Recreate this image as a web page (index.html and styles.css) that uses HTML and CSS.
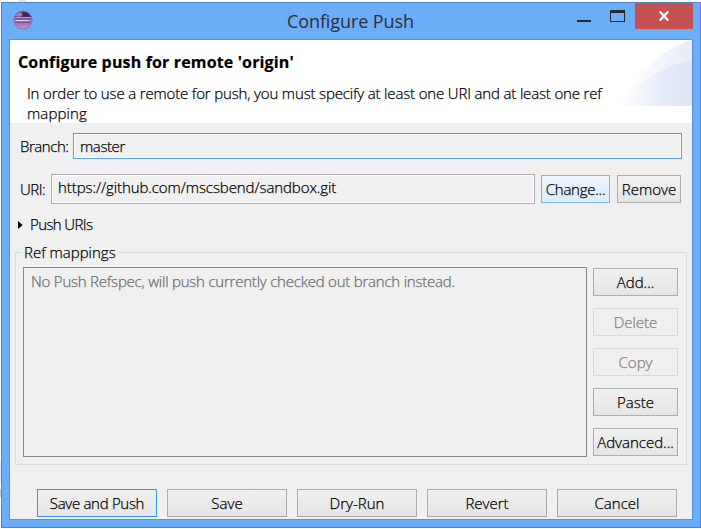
FILE: index.html
```
<!DOCTYPE html>
<html lang="en">
<head>
<meta charset="utf-8">
<title>Configure Push</title>
<link rel="stylesheet" href="styles.css">
</head>
<body>
<div class="window">
  <div class="titlebar">
    <svg class="app-icon" width="20" height="20" viewBox="0 0 20 20">
      <defs>
        <linearGradient id="orb" x1="0" y1="0" x2="0" y2="1">
          <stop offset="0" stop-color="#6b4a80"/>
          <stop offset="0.25" stop-color="#55356f"/>
          <stop offset="0.5" stop-color="#8562a8"/>
          <stop offset="1" stop-color="#bd9dd0"/>
        </linearGradient>
        <clipPath id="disc"><circle cx="10" cy="10" r="9"/></clipPath>
      </defs>
      <circle cx="10" cy="10" r="9.300" fill="url(#orb)"/>
      <g clip-path="url(#disc)">
        <path d="M9 2h10v5H7z" fill="#35194f" opacity=".6"/>
        <path d="M1 7.500h18M1 10.500h18" stroke="#b898cc" stroke-width="1"/>
        <path d="M3 10.500h12" stroke="#e6d0ea" stroke-width="1"/>
        <path d="M3 12.500h14" stroke="#7a559c" stroke-width="1"/>
        <ellipse cx="6" cy="4.500" rx="3.500" ry="2" fill="#c9a5bb" opacity=".7"/>
      </g>
      <circle cx="10" cy="10" r="9" fill="none" stroke="#8473b4" stroke-width="1"/>
    </svg>
    <h1 class="title">Configure Push</h1>
    <div class="controls">
      <svg width="59" height="26" viewBox="0 0 59 26" shape-rendering="crispEdges">
        <path d="M1 17h14v2H1z" fill="#2a2a2a"/>
        <path d="M34 7h15v12H34zM35 10v8h13v-8z" fill="#2a2a2a" fill-rule="evenodd"/>
      </svg>
      <div class="close">
        <svg width="12" height="10" viewBox="0 0 12 10"><path d="M1.800 .5l8.400 9M10.200 .5l-8.400 9" stroke="#fff" stroke-width="2.300"/></svg>
      </div>
    </div>
  </div>

  <div class="client">
    <div class="header">
      <div class="header-text">
        <h2 class="heading">Configure push for remote 'origin'</h2>
        <p class="message"><span class="line1">In order to use a remote for push, you must specify at least one URI and at least one ref</span> <span class="line2">mapping</span></p>
      </div>
      <svg class="swoosh" width="73" height="66" viewBox="0 0 73 66">
        <defs>
          <linearGradient id="g1" x1="0" x2="1"><stop offset="0" stop-color="#fff"/><stop offset="1" stop-color="#e9eef9"/></linearGradient>
          <linearGradient id="g2" x1="0" x2="1"><stop offset="0" stop-color="#f1f4fc"/><stop offset="1" stop-color="#e6ebf8"/></linearGradient>
          <linearGradient id="g3" x1="0" x2="1"><stop offset="0" stop-color="#fff"/><stop offset=".6" stop-color="#e6ebf9"/><stop offset="1" stop-color="#dce4f6"/></linearGradient>
        </defs>
        <path d="M0 66C18 36 39 10 73 0V66z" fill="url(#g1)"/>
        <path d="M30 66C34 36 50 8 73 0V66z" fill="url(#g2)" opacity=".7"/>
        <path d="M0 66C22 42 44 24 73 21V66z" fill="url(#g3)"/>
      </svg>
    </div>

    <div class="row branch-row">
      <span class="label t-branch">Branch:</span>
      <div class="field branch-field"><span class="t-master">master</span></div>
    </div>

    <div class="row uri-row">
      <span class="label t-uri">URI:</span>
      <div class="field uri-field"><span class="t-url">https://github.com/mscsbend/sandbox.git</span></div>
      <div class="btn hot change"><span class="t-change">Change...</span></div>
      <div class="btn remove"><span>Remove</span></div>
    </div>

    <div class="expander">
      <svg width="5" height="8" viewBox="0 0 5 8"><path d="M0 0L4.600 4L0 8z"/></svg>
      <span class="t-push">Push URIs</span>
    </div>

    <div class="group">
      <div class="legend"><i></i><span>Ref mappings</span><b></b></div>
      <div class="group-body">
        <div class="list"><span>No Push Refspec, will push currently checked out branch instead.</span></div>
        <div class="side">
          <div class="btn"><span>Add...</span></div>
          <div class="btn disabled"><span>Delete</span></div>
          <div class="btn disabled"><span>Copy</span></div>
          <div class="btn"><span>Paste</span></div>
          <div class="btn"><span>Advanced...</span></div>
        </div>
      </div>
    </div>

    <div class="footer">
      <div class="btn default"><span class="t-save-push">Save and Push</span></div>
      <div class="btn"><span>Save</span></div>
      <div class="btn"><span>Dry-Run</span></div>
      <div class="btn"><span>Revert</span></div>
      <div class="btn"><span>Cancel</span></div>
    </div>
  </div>
</div>
</body>
</html>
```
FILE: styles.css
```
* { box-sizing: border-box; }
body {
  margin: 0;
  min-height: 529px;
  background:
    linear-gradient(#e6e6e2, #e6e6e2) 19px 0 / 7px 2px no-repeat,
    linear-gradient(#e8e8e8, #e8e8e8) 0 462px / 1px 20px no-repeat,
    linear-gradient(#d4d4cc, #d4d4cc) 0 489px / 1px 8px no-repeat,
    #fff;
  font: 300 15px/20px "Open Sans", "Noto Sans", sans-serif;
  color: #000;
  -webkit-text-stroke: .25px currentColor;
  white-space: nowrap;
  overflow: hidden;
  display: flow-root;
}
h1, h2, p { margin: 0; }
svg { display: block; flex: none; }

.window {
  width: 700px;
  height: 526px;
  margin: 2px 0 0 1px;
  padding: 0 7px 7px;
  border: 1px solid #4a86c8;
  background: #6badf6;
}
.titlebar { display: flex; height: 36px; }
.app-icon { margin: 7px 0 0 4px; }
.title {
  flex: 1;
  margin: 4px 0 0 254px;
  font-size: 18px;
  font-weight: 400;
  line-height: 28px;
  letter-spacing: -.1px;
  color: #2a3038;
  -webkit-text-stroke: 0;
}
.controls { display: flex; width: 117px; }
.close {
  display: flex;
  width: 58px;
  height: 26px;
  justify-content: center;
  padding-top: 8px;
  background: #c75050;
}

.client {
  height: 481px;
  border: 1px solid #5a93d2;
  background: #f0f0f0;
}
.header {
  display: flex;
  justify-content: space-between;
  height: 83px;
  background: #fff;
}
.header-text { width: 600px; flex: none; padding: 11px 0 0 8px; }
.heading {
  font-size: 16px;
  font-weight: 700;
  line-height: 22px;
  letter-spacing: .15px;
  -webkit-text-stroke: .2px #000;
}
.message { padding: 10px 0 0 9px; }
.message span { display: block; }
.line1 { letter-spacing: -.16px; }
.line2 { letter-spacing: .1px; }

.row { display: flex; padding-left: 9px; }
.field {
  border: 1px solid #abadb3;
  box-shadow: inset 0 0 0 1px #fff;
  padding-left: 6px;
}
.branch-row { margin-top: 10px; }
.label { flex: none; padding-left: 1px; }
.branch-row .label { width: 54px; padding-top: 3px; }
.branch-field { width: 609px; height: 26px; border-color: #569de5; padding-top: 2px; }
.uri-row { margin-top: 15px; height: 30px; }
.uri-row .label { width: 32px; padding-top: 5px; }
.uri-field { width: 484px; height: 30px; padding-top: 2px; }

.btn {
  display: flex;
  flex: none;
  height: 28px;
  justify-content: center;
  padding-top: 3px;
  border: 1px solid #acacac;
  background: linear-gradient(#f0f0f0, #e5e5e5);
}
.btn.hot { border-color: #7eb4ea; background: linear-gradient(#ecf4fc, #dcecfc); }
.btn.default { border-color: #3399ff; }
.btn.disabled { border-color: #d9d9d9; background: #efefef; color: #838383; }
.change { width: 69px; margin: 1px 0 0 6px; }
.remove { width: 64px; margin: 1px 0 0 7px; }

.expander { display: flex; height: 20px; margin: 10px 0 0 8px; }
.expander svg { margin-top: 7px; }
.expander span { margin-left: 7px; }

.group {
  display: flow-root;
  width: 672px;
  height: 213px;
  margin: 18px 0 0 5px;
  border: 1px solid #dcdcdc;
  border-top: 0;
}
.legend { display: flex; height: 20px; margin-top: -11px; }
.legend i, .legend b { height: 1px; margin-top: 11px; background: #dcdcdc; }
.legend i { width: 6px; margin-right: 2px; }
.legend span { width: 95px; margin-top: 1px; }
.legend b { flex: 1; }
.group-body { display: flex; padding: 6px 0 0 7px; }
.list {
  width: 564px;
  height: 190px;
  padding: 3px 0 0 7px;
  border: 1px solid #828790;
  color: #6d6d6d;
  letter-spacing: -.22px;
}
.side { display: flex; flex-direction: column; gap: 12px; margin: 1px 0 0 6px; }
.side .btn { width: 85px; }
.footer { display: flex; gap: 10px; margin: 24px 0 0 27px; }
.footer .btn { width: 120px; }

.t-branch { letter-spacing: -.45px; }
.t-master { letter-spacing: -.4px; }
.t-uri { letter-spacing: -.5px; }
.t-url { letter-spacing: -.08px; }
.t-change { letter-spacing: -.25px; }
.t-push { letter-spacing: -.6px; }
.t-save-push { letter-spacing: -.3px; }
```
